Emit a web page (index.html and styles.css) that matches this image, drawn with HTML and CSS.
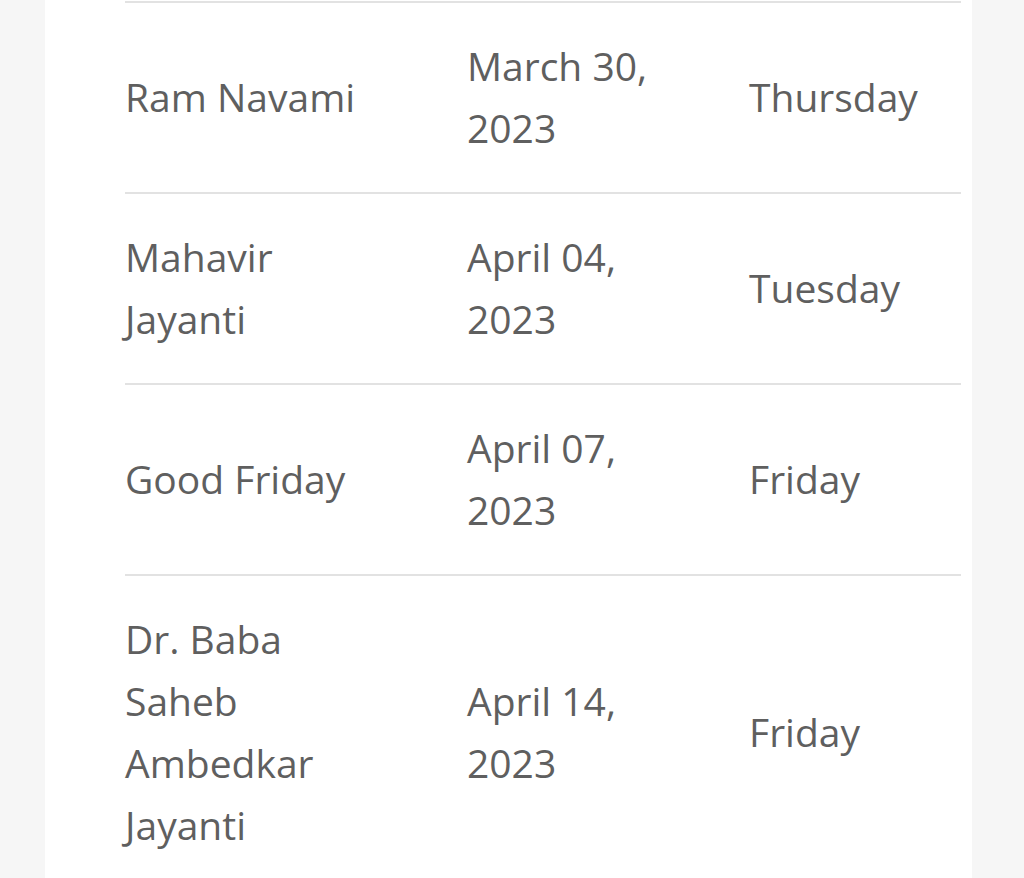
FILE: index.html
```html
<!DOCTYPE html>
<html lang="en">
<head>
<meta charset="utf-8">
<title>Holidays 2023</title>
<link rel="stylesheet" href="styles.css">
</head>
<body>
<main class="card">
  <div class="table">
    <div class="row">
      <div class="cell">Ram Navami</div>
      <div class="cell">March 30, 2023</div>
      <div class="cell">Thursday</div>
    </div>
    <div class="row">
      <div class="cell">Mahavir Jayanti</div>
      <div class="cell">April 04, 2023</div>
      <div class="cell">Tuesday</div>
    </div>
    <div class="row">
      <div class="cell">Good Friday</div>
      <div class="cell">April 07, 2023</div>
      <div class="cell">Friday</div>
    </div>
    <div class="row">
      <div class="cell">Dr. Baba Saheb Ambedkar Jayanti</div>
      <div class="cell">April 14, 2023</div>
      <div class="cell">Friday</div>
    </div>
  </div>
</main>
</body>
</html>
```
FILE: styles.css
```css
html, body {
  margin: 0;
  padding: 0;
}
body {
  background: #f6f6f6;
  font-family: "Open Sans", "Noto Sans", sans-serif;
  color: #5f5f5f;
  min-height: 878px;
}
.card {
  background: #ffffff;
  margin: 0 52px 0 45px;
  padding: 1px 11px 0 80px;
  min-height: 877px;
}
.table {
  display: flex;
  flex-direction: column;
}
.row {
  display: grid;
  grid-template-columns: 342px 282px 1fr;
  align-items: center;
  border-top: 2px solid #e2e2e2;
  padding: 32px 0 33px;
}
.cell {
  font-size: 39px;
  line-height: 62px;
  padding-right: 80px;
}
.cell:last-child {
  padding-right: 0;
}
```
